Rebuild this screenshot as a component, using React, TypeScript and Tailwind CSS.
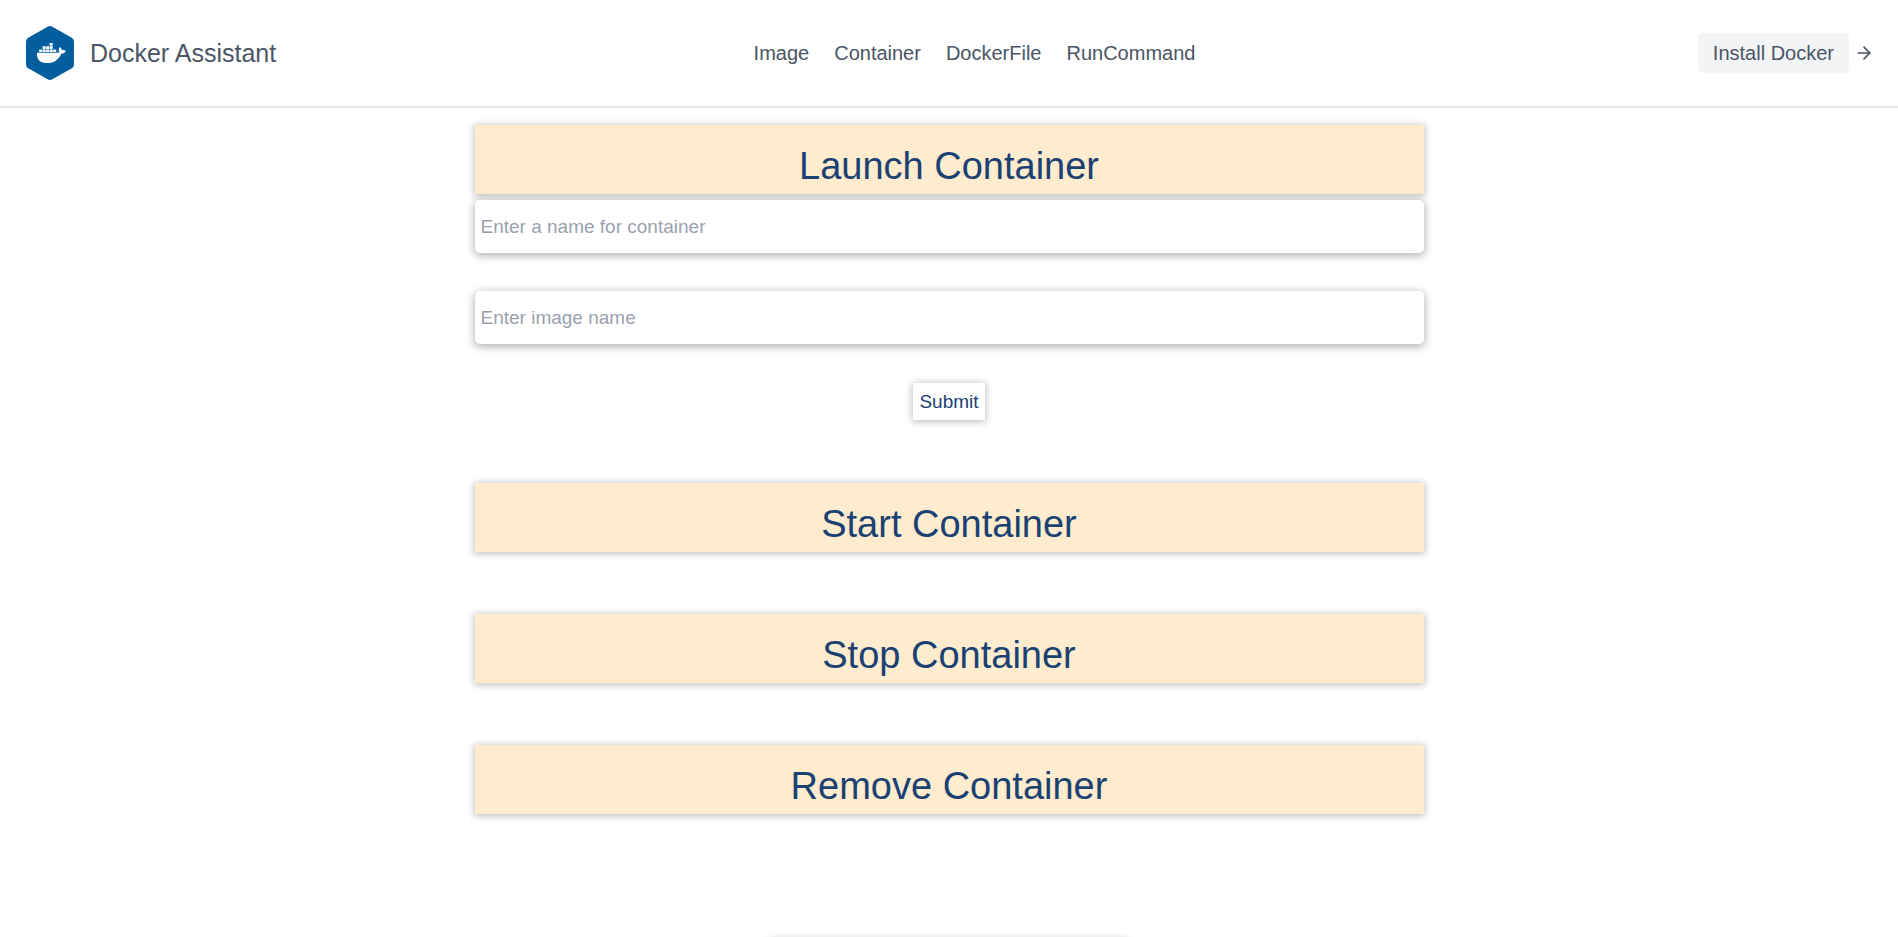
import { FiArrowRight } from "react-icons/fi";

const navLinks = ["Image", "Container", "DockerFile", "RunCommand"];

const shadow = "shadow-[0_1px_7px_1px_rgba(0,0,0,0.25)]";

const crates = [
  [23.7, 17],
  [16.7, 20.2],
  [20.2, 20.2],
  [23.7, 20.2],
  [13.2, 23.4],
  [16.7, 23.4],
  [20.2, 23.4],
  [23.7, 23.4],
  [27.2, 23.4],
];

function Logo() {
  return (
    <svg className="h-[54px] w-12" viewBox="0 0 48 54" aria-hidden="true">
      <path
        d="M21.6 0.7 Q24 -0.6 26.4 0.7 L45.8 11.7 Q48 13 48 15.6 V38.4 Q48 41 45.8 42.3 L26.4 53.3 Q24 54.6 21.6 53.3 L2.2 42.3 Q0 41 0 38.4 V15.6 Q0 13 2.2 11.7 Z"
        fill="#025e9e"
      />
      <g fill="#ffffff">
        {crates.map(([x, y]) => (
          <rect key={`${x}-${y}`} x={x} y={y} width="3" height="2.7" rx="0.2" />
        ))}
        <path d="M11.6 26.7 H31 C32.1 26.7 33 26.5 33.6 26.2 C32.4 24.4 32.4 22.5 33.7 20.9 C35 21.8 35.8 22.9 36 24.2 C37.4 23.9 38.8 24.2 39.8 24.9 C39 26.7 37.3 27.6 35.2 27.7 C32.7 33.8 28 37 21.2 37 C14.5 37 10.6 33.6 10.9 27.4 C10.9 27 11.2 26.7 11.6 26.7 Z" />
      </g>
    </svg>
  );
}

function Header() {
  return (
    <header className="flex h-[108px] items-center justify-between border-b-2 border-gray-200 px-6 text-gray-600">
      <a href="#home" className="flex items-center gap-4 pl-0.5 text-[25px] leading-8">
        <Logo />
        <span>Docker Assistant</span>
      </a>
      <nav className="flex gap-[25px] pr-[25px] text-xl">
        {navLinks.map((label) => (
          <a key={label} href={`#${label.toLowerCase()}`}>
            {label}
          </a>
        ))}
      </nav>
      <div className="flex items-center gap-[5px]">
        <button type="button" className="h-10 rounded-[5px] bg-gray-100 px-[15px] text-xl">
          Install Docker
        </button>
        <FiArrowRight size={20} aria-hidden="true" />
      </div>
    </header>
  );
}

function Banner({ title }: { title: string }) {
  return (
    <h1
      className={`flex h-[69px] items-end justify-center bg-[#ffebcd] pb-1.5 text-[38px] leading-[44px] text-[#1a4173] ${shadow}`}
    >
      {title}
    </h1>
  );
}

function Field({ label }: { label: string }) {
  return (
    <input
      type="text"
      aria-label={label}
      placeholder={label}
      className="h-[53px] w-full rounded-[5px] bg-white px-1.5 text-[19px] placeholder-gray-400 shadow-[0_2px_8px_1px_rgba(0,0,0,0.3)] outline-none"
    />
  );
}

export default function App() {
  return (
    <div className="min-h-screen bg-white font-['Liberation_Sans',Arial,sans-serif]">
      <Header />
      <main className="mx-auto flex w-1/2 flex-col gap-[62px] pt-[17px]">
        <section>
          <Banner title="Launch Container" />
          <form className="flex flex-col items-center pt-1.5 pb-px">
            <Field label="Enter a name for container" />
            <div className="mt-[38px] w-full">
              <Field label="Enter image name" />
            </div>
            <button
              type="button"
              className={`mt-[39px] h-[37px] bg-white px-1.5 pt-0.5 text-[19px] text-[#1a4173] ${shadow}`}
            >
              Submit
            </button>
          </form>
        </section>
        <Banner title="Start Container" />
        <Banner title="Stop Container" />
        <Banner title="Remove Container" />
      </main>
      <footer className={`mx-auto mt-[125px] h-2 w-[356px] bg-white ${shadow}`} />
    </div>
  );
}
